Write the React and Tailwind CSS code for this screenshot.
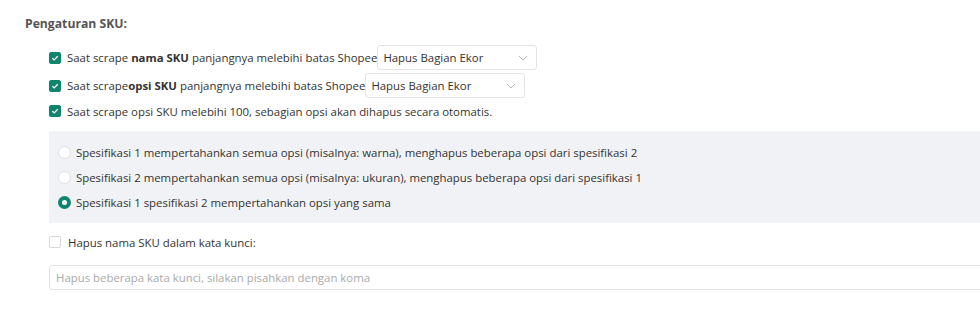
import React from "react";

// checkbox square, teal when checked
const Check = ({ on }) => (
    <span className={"flex h-[12px] w-[12px] shrink-0 items-center justify-center rounded-[2px] border " + (on ? "border-[#10856e] bg-[#10856e]" : "border-[#d9d9d9] bg-white")}>
        {on && (
            <svg width="8" height="8" viewBox="0 0 8 8" fill="none">
                <path d="M1.3 4.1 3.2 5.9 6.7 2.2" stroke="white" strokeWidth="1.3" />
            </svg>
        )}
    </span>
);

const Radio = ({ on }) => (
    <span className={"flex h-[13px] w-[13px] shrink-0 items-center justify-center rounded-full " + (on ? "bg-[#10856e]" : "border border-[#dcdfe6] bg-white")}>
        {on && <span className="h-[5px] w-[5px] rounded-full bg-white" />}
    </span>
);

const Select = () => (
    <div className="-ml-[6px] flex h-[25px] w-[160px] items-center justify-between rounded-[3px] border border-[#e4e4e4] bg-white pl-[5px] pr-[8px]">
        <span className="text-[#333]">Hapus Bagian Ekor</span>
        <svg width="10" height="6" viewBox="0 0 10 6" fill="none">
            <path d="M1 1l4 4 4-4" stroke="#b5b5b5" strokeWidth="1" />
        </svg>
    </div>
);

export default function App() {
    return (
        <div className="h-[324px] w-[980px] overflow-hidden bg-white font-['Open_Sans','Noto_Sans',sans-serif] text-[11.4px] text-[#333]">
            {/* heading */}
            <div className="pl-[25px] pt-[15px] text-[12.2px] font-bold text-[#555]">Pengaturan SKU:</div>

            {/* content runs past the right edge of the window */}
            <div className="w-[1000px] pl-[49px] pt-[12px]">
                {/* rule rows */}
                <div className="flex h-[25px] items-center gap-[6px]">
                    <Check on />
                    <span>Saat scrape <b>nama SKU</b> panjangnya melebihi batas Shopee</span>
                    <Select />
                </div>
                <div className="mt-[3px] flex h-[25px] items-center gap-[6px]">
                    <Check on />
                    <span>Saat scrape<b>opsi SKU</b> panjangnya melebihi batas Shopee</span>
                    <Select />
                </div>
                <div className="mt-[2px] flex h-[22px] items-center gap-[6px]">
                    <Check on />
                    <span>Saat scrape opsi SKU melebihi 100, sebagian opsi akan dihapus secara otomatis.</span>
                </div>

                {/* options panel */}
                <div className="mt-[9px] flex h-[92px] flex-col gap-[12px] bg-[#f0f2f5] pl-[9px] pt-[15px]">
                    <label className="flex h-[13px] items-center gap-[5px]">
                        <Radio />
                        <span>Spesifikasi 1 mempertahankan semua opsi (misalnya: warna), menghapus beberapa opsi dari spesifikasi 2</span>
                    </label>
                    <label className="flex h-[13px] items-center gap-[5px]">
                        <Radio />
                        <span>Spesifikasi 2 mempertahankan semua opsi (misalnya: ukuran), menghapus beberapa opsi dari spesifikasi 1</span>
                    </label>
                    <label className="flex h-[13px] items-center gap-[5px]">
                        <Radio on />
                        <span>Spesifikasi 1 spesifikasi 2 mempertahankan opsi yang sama</span>
                    </label>
                </div>

                {/* keyword removal */}
                <div className="mt-[12px] flex h-[14px] items-center gap-[7px]">
                    <Check />
                    <span>Hapus nama SKU dalam kata kunci:</span>
                </div>
                <div className="mt-[16px] flex h-[25px] items-center rounded-[3px] border border-[#e2e2e2] pl-[6px] text-[#aaa]">
                    Hapus beberapa kata kunci, silakan pisahkan dengan koma
                </div>
            </div>
        </div>
    );
}
